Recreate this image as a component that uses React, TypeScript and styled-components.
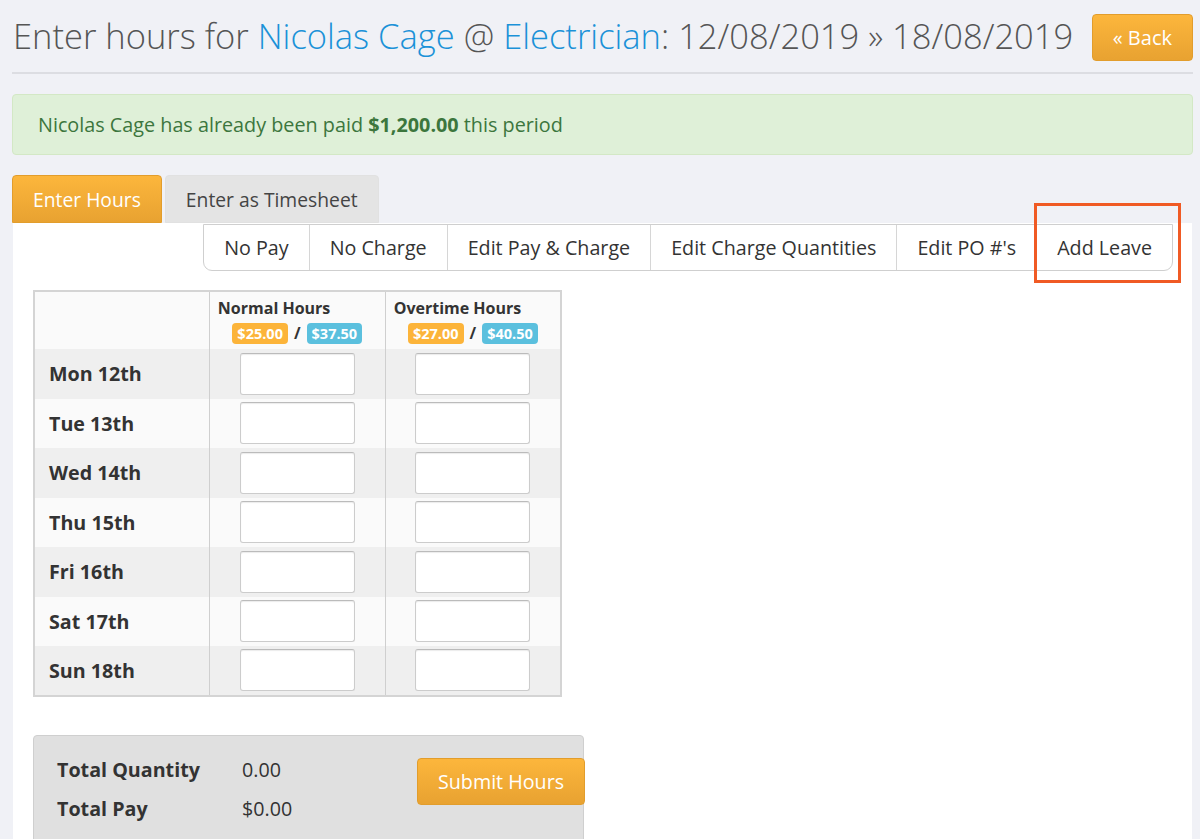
import React from 'react';
import styled, { createGlobalStyle, css } from 'styled-components';

const GlobalStyle = createGlobalStyle`
    html, body {
        margin: 0;
        padding: 0;
        background: #f0f1f6;
        font-family: 'Open Sans', 'Noto Sans', sans-serif;
        color: #333;
    }
    * {
        box-sizing: border-box;
    }
`;

const orangeButton = css`
    background: linear-gradient(to bottom, #fcb63c 0%, #e8a231 100%);
    border: 1px solid #e29d2c;
    color: #fff;
    border-radius: 4px;
    font-family: inherit;
    white-space: nowrap;
    cursor: pointer;
`;

const Page = styled.div`
    padding: 0 7px 0 12px;
    position: relative;
`;

const Header = styled.div`
    display: flex;
    align-items: center;
    justify-content: space-between;
    height: 74px;
    border-bottom: 2px solid #dcdde2;
    padding-bottom: 2px;
`;

const Title = styled.h1`
    margin: 0 0 0 1px;
    font-size: 34.5px;
    font-weight: 300;
    color: #555;
    white-space: nowrap;
`;

const TitleLink = styled.a`
    color: #1b92d8;
    text-decoration: none;
`;

const BackButton = styled.button`
    ${orangeButton};
    height: 47px;
    padding: 0 20px;
    font-size: 20px;
    margin-top: 4px;
`;

const Alert = styled.div`
    margin-top: 20px;
    height: 61px;
    display: flex;
    align-items: center;
    padding: 0 25px;
    background: #dff0d8;
    border: 1px solid #d3e8c5;
    border-radius: 4px;
    color: #3c763d;
    font-size: 19.8px;

    strong {
        font-weight: 700;
    }
`;

const Tabs = styled.div`
    display: flex;
    gap: 3px;
    margin-top: 20px;
`;

const Tab = styled.button<{ $active?: boolean }>`
    height: 48px;
    padding: 0 20px;
    font-size: 19.3px;
    font-family: inherit;
    border-radius: 4px 4px 0 0;
    cursor: pointer;
    ${props => props.$active
        ? css`
            background: linear-gradient(to bottom, #fcb63c 0%, #e8a231 100%);
            border: 1px solid #e29d2c;
            color: #fff;
        `
        : css`
            background: #e4e4e4;
            border: 1px solid #e1e1e1;
            color: #444;
        `}
`;

const Panel = styled.div`
    background: #fff;
    margin: 0 1px 0 1px;
    padding: 0 19px 40px 20px;
    min-height: 620px;
`;

const SubNav = styled.div`
    display: flex;
    justify-content: flex-end;
    padding-top: 1px;
`;

const NavGroup = styled.div`
    display: flex;
    border: 1px solid #cfcfcf;
    border-radius: 0 0 9px 9px;
    overflow: hidden;
`;

const NavItem = styled.div`
    height: 45px;
    display: flex;
    align-items: center;
    padding: 0 20px;
    font-size: 19.7px;
    color: #333;
    border-left: 1px solid #d6d6d6;

    &:first-child {
        border-left: none;
    }
`;

const HoursTable = styled.table`
    margin-top: 19px;
    border-collapse: collapse;
    border: 2px solid #d4d4d4;
    width: 529px;
`;

const HeadCell = styled.th`
    width: 176px;
    height: 58px;
    padding: 5px 8px 4px 8px;
    background: #fafafa;
    border-left: 1px solid #cfcfcf;
    text-align: left;
    vertical-align: top;
    font-size: 16px;
    font-weight: 700;
    color: #333;

    &:first-child {
        border-left: none;
    }
`;

const Rates = styled.div`
    display: flex;
    justify-content: center;
    align-items: center;
    gap: 6px;
    margin-top: 3px;
    font-size: 16px;
`;

const Badge = styled.span<{ $tone: 'orange' | 'blue' }>`
    background: ${props => (props.$tone === 'orange' ? '#fcb43a' : '#5bc0de')};
    color: #fff;
    font-size: 14.5px;
    font-weight: 700;
    padding: 0 5px;
    border-radius: 4px;
    line-height: 21px;
`;

const Row = styled.tr<{ $odd: boolean }>`
    background: ${props => (props.$odd ? '#efefef' : '#fafafa')};
`;

const DayCell = styled.td`
    height: 49.5px;
    padding: 0 0 0 14px;
    font-size: 19.7px;
    font-weight: 700;
    color: #333;
`;

const InputCell = styled.td`
    border-left: 1px solid #cfcfcf;
    text-align: center;
    vertical-align: middle;
`;

const HoursInput = styled.input`
    width: 115px;
    height: 42px;
    border: 1px solid #ccc;
    border-top-color: #bbb;
    border-radius: 3px;
    background: #fff;
    box-shadow: inset 0 1px 1px rgba(0, 0, 0, 0.08);
    display: block;
    margin: 0 auto;
`;

const Summary = styled.div`
    margin-top: 38px;
    width: 551px;
    height: 130px;
    background: #e0e0e0;
    border: 1px solid #cfcfcf;
    border-radius: 4px;
    display: flex;
    align-items: flex-start;
    padding: 20px 0 0 23px;
`;

const Totals = styled.div`
    display: grid;
    grid-template-columns: 185px 175px;
    row-gap: 12px;
    font-size: 19.7px;
`;

const TotalLabel = styled.div`
    font-weight: 700;
    color: #333;
`;

const TotalValue = styled.div`
    color: #333;
`;

const SubmitButton = styled.button`
    ${orangeButton};
    height: 47px;
    padding: 0 20px;
    font-size: 19.7px;
    margin-top: 2px;
`;

const Highlight = styled.div`
    position: absolute;
    left: 1034px;
    top: 203px;
    width: 147px;
    height: 80px;
    border: 3px solid #f05a24;
    pointer-events: none;
`;

const days = ['Mon 12th', 'Tue 13th', 'Wed 14th', 'Thu 15th', 'Fri 16th', 'Sat 17th', 'Sun 18th'];
const navItems = ['No Pay', 'No Charge', 'Edit Pay & Charge', 'Edit Charge Quantities', "Edit PO #'s", 'Add Leave'];

export default function App() {
    return (
        <>
            <GlobalStyle />
            <Page>
                <Header>
                    <Title>
                        Enter hours for <TitleLink>Nicolas Cage</TitleLink> @ <TitleLink>Electrician</TitleLink>: 12/08/2019 » 18/08/2019
                    </Title>
                    <BackButton>« Back</BackButton>
                </Header>

                <Alert>
                    <span>
                        Nicolas Cage has already been paid <strong>$1,200.00</strong> this period
                    </span>
                </Alert>

                <Tabs>
                    <Tab $active>Enter Hours</Tab>
                    <Tab>Enter as Timesheet</Tab>
                </Tabs>

                <Panel>
                    <SubNav>
                        <NavGroup>
                            {navItems.map(item => (
                                <NavItem key={item}>{item}</NavItem>
                            ))}
                        </NavGroup>
                    </SubNav>

                    <HoursTable>
                        <thead>
                            <tr>
                                <HeadCell />
                                <HeadCell>
                                    Normal Hours
                                    <Rates>
                                        <Badge $tone="orange">$25.00</Badge>/<Badge $tone="blue">$37.50</Badge>
                                    </Rates>
                                </HeadCell>
                                <HeadCell>
                                    Overtime Hours
                                    <Rates>
                                        <Badge $tone="orange">$27.00</Badge>/<Badge $tone="blue">$40.50</Badge>
                                    </Rates>
                                </HeadCell>
                            </tr>
                        </thead>
                        <tbody>
                            {days.map((day, index) => (
                                <Row key={day} $odd={index % 2 === 0}>
                                    <DayCell>{day}</DayCell>
                                    <InputCell>
                                        <HoursInput />
                                    </InputCell>
                                    <InputCell>
                                        <HoursInput />
                                    </InputCell>
                                </Row>
                            ))}
                        </tbody>
                    </HoursTable>

                    <Summary>
                        <Totals>
                            <TotalLabel>Total Quantity</TotalLabel>
                            <TotalValue>0.00</TotalValue>
                            <TotalLabel>Total Pay</TotalLabel>
                            <TotalValue>$0.00</TotalValue>
                        </Totals>
                        <SubmitButton>Submit Hours</SubmitButton>
                    </Summary>
                </Panel>

                <Highlight />
            </Page>
        </>
    );
}
